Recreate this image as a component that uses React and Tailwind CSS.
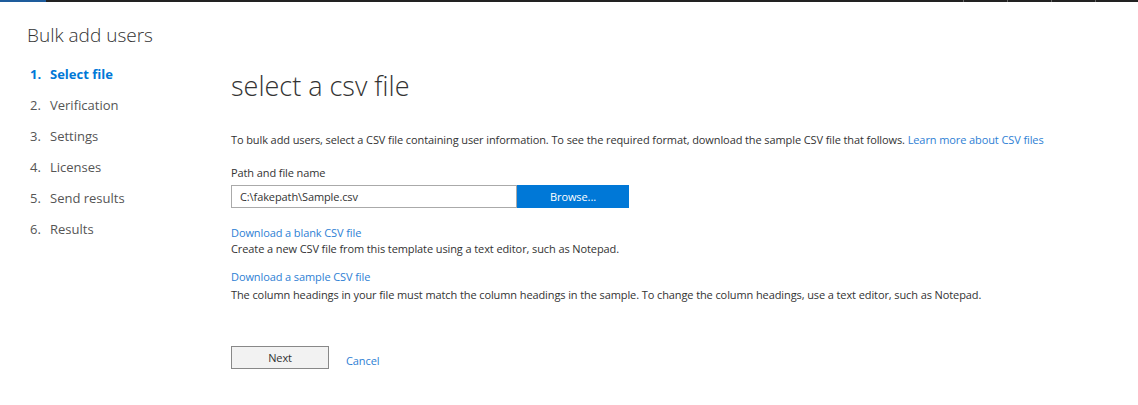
const steps = ['Select file', 'Verification', 'Settings', 'Licenses', 'Send results', 'Results'];

export default function App() {
  return (
    <div className="h-[405px] w-[1138px] bg-white text-[#333] [font-family:'Segoe_UI','Open_Sans',sans-serif]">
      <div className="flex h-[2px] bg-[#222]">
        <div className="w-[46px] bg-[#1e5c9c]" />
        <div className="flex-1" />
        <div className="flex w-[176px] gap-[43px] pl-[1px]">
          <div className="w-[1px] bg-[#666]" />
          <div className="w-[1px] bg-[#666]" />
          <div className="w-[1px] bg-[#666]" />
          <div className="w-[1px] bg-[#666]" />
        </div>
      </div>

      <div className="flex">
        <aside className="w-[231px] shrink-0 pl-[27px] pt-[20px]">
          <h1 className="text-[19px] font-light leading-[26px] text-[#333]">Bulk add users</h1>
          <ol className="mt-[11px] pl-[3px]">
            {steps.map((step, index) => (
              <li
                key={step}
                className={
                  index === 0
                    ? 'flex h-[31px] items-center text-[13px] font-bold text-[#0078d7]'
                    : 'flex h-[31px] items-center text-[13px] text-[#555]'
                }
              >
                <span className="w-[20px]">{index + 1}.</span>
                <span>{step}</span>
              </li>
            ))}
          </ol>
        </aside>

        <main className="flex-1 pt-[64px] text-[11px] leading-[16px] tracking-[-0.1px]">
          <h2 className="text-[27px] font-light leading-[40px] tracking-normal text-[#333]">select a csv file</h2>

          <p className="mt-[26px]">
            To bulk add users, select a CSV file containing user information. To see the required format, download the sample CSV file that follows.{' '}
            <a className="text-[#2e80d4]">Learn more about CSV files</a>
          </p>

          <label className="mt-[17px] block">Path and file name</label>
          <div className="mt-[4px] flex h-[23px]">
            <div className="flex w-[286px] items-center border border-[#aaa] px-[8px]">C:\fakepath\Sample.csv</div>
            <button type="button" className="w-[112px] bg-[#0078d7] text-white">Browse...</button>
          </div>

          <a className="mt-[17px] block text-[#2e80d4]">Download a blank CSV file</a>
          <p>Create a new CSV file from this template using a text editor, such as Notepad.</p>

          <a className="mt-[12px] block text-[#2e80d4]">Download a sample CSV file</a>
          <p className="mt-[2px]">The column headings in your file must match the column headings in the sample. To change the column headings, use a text editor, such as Notepad.</p>

          <div className="mt-[43px] flex items-center gap-[17px]">
            <button type="button" className="h-[23px] w-[98px] border border-[#888] bg-[#f2f2f2] text-[#333]">Next</button>
            <a className="pt-[6px] text-[#2e80d4]">Cancel</a>
          </div>
        </main>
      </div>
    </div>
  );
}
